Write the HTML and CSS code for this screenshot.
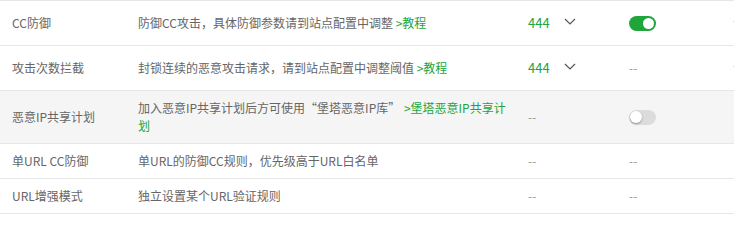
FILE: index.html
```html
<!DOCTYPE html>
<html lang="zh-CN">
<head>
<meta charset="utf-8">
<title>CC防御</title>
<link rel="stylesheet" href="styles.css">
</head>
<body>
<table class="tbl">
  <colgroup>
    <col class="c-name"><col class="c-desc"><col class="c-val"><col class="c-sw"><col class="c-op">
  </colgroup>
  <tbody>
    <tr>
      <td>CC防御</td>
      <td class="desc">防御CC攻击，具体防御参数请到站点配置中调整 <a class="lnk">&gt;教程</a></td>
      <td class="val"><span class="sel"><span class="num">444</span><svg class="chev" width="12" height="7" viewBox="0 0 12 7"><polyline points="1,1 6,6 11,1" fill="none" stroke="#555" stroke-width="1.2"/></svg></span></td>
      <td><span class="sw on"><span class="knob"></span></span></td>
      <td><a class="lnk">设置</a></td>
    </tr>
    <tr>
      <td>攻击次数拦截</td>
      <td class="desc">封锁连续的恶意攻击请求，请到站点配置中调整阈值 <a class="lnk">&gt;教程</a></td>
      <td class="val"><span class="sel"><span class="num">444</span><svg class="chev" width="12" height="7" viewBox="0 0 12 7"><polyline points="1,1 6,6 11,1" fill="none" stroke="#555" stroke-width="1.2"/></svg></span></td>
      <td class="dash">--</td>
      <td><a class="lnk">设置</a></td>
    </tr>
    <tr class="hl">
      <td>恶意IP共享计划</td>
      <td class="desc">加入恶意IP共享计划后方可使用“堡塔恶意IP库” <a class="lnk lnk-gap">&gt;堡塔恶意IP共享计划</a></td>
      <td class="val dash">--</td>
      <td><span class="sw off"><span class="knob"></span></span></td>
      <td></td>
    </tr>
    <tr>
      <td>单URL CC防御</td>
      <td class="desc">单URL的防御CC规则，优先级高于URL白名单</td>
      <td class="val dash">--</td>
      <td class="dash">--</td>
      <td></td>
    </tr>
    <tr>
      <td>URL增强模式</td>
      <td class="desc">独立设置某个URL验证规则</td>
      <td class="val dash">--</td>
      <td class="dash">--</td>
      <td></td>
    </tr>
  </tbody>
</table>
</body>
</html>
```

FILE: styles.css
```css
html, body {
  margin: 0;
  padding: 0;
  overflow: hidden;
  background: #fff;
}
body {
  width: 734px;
  font-family: "Noto Sans CJK SC", "Noto Sans", sans-serif;
  font-size: 12px;
  color: #666;
}
.tbl {
  border-collapse: collapse;
  table-layout: fixed;
  width: 821px;
  border-top: 1px solid #e6e6e6;
}
.c-name { width: 126px; }
.c-desc { width: 387px; }
.c-val { width: 104px; }
.c-sw { width: 104px; }
.c-op { width: 100px; }
.tbl td {
  padding: 8px 12px;
  line-height: 18px;
  border-bottom: 1px solid #e6e6e6;
  vertical-align: middle;
  text-align: left;
}
.tbl td.desc {
  padding-right: 0;
}
.tbl td.val {
  padding-left: 15px;
}
.tbl tr.hl td {
  background: #f5f5f5;
}
.lnk {
  color: #20a53a;
  text-decoration: none;
}
.lnk-gap {
  margin-left: 1px;
}
.dash {
  color: #999;
}
.sel {
  display: flex;
  align-items: center;
  height: 28px;
}
.num {
  color: #20a53a;
  font-size: 13px;
}
.chev {
  margin-left: 14px;
  margin-top: -3px;
}
.sw {
  display: flex;
  align-items: center;
  width: 27px;
  height: 15px;
  border-radius: 8px;
  box-sizing: border-box;
  padding: 0 2px;
}
.sw.on {
  background: #20a53a;
  justify-content: flex-end;
}
.sw.off {
  background: #dcdcdc;
  justify-content: flex-start;
  padding: 0 1px;
}
.knob {
  width: 11px;
  height: 11px;
  border-radius: 50%;
  background: #fff;
}
.sw.off .knob {
  width: 12px;
  height: 12px;
  box-shadow: 0 1px 2px rgba(0, 0, 0, 0.35);
}
```
